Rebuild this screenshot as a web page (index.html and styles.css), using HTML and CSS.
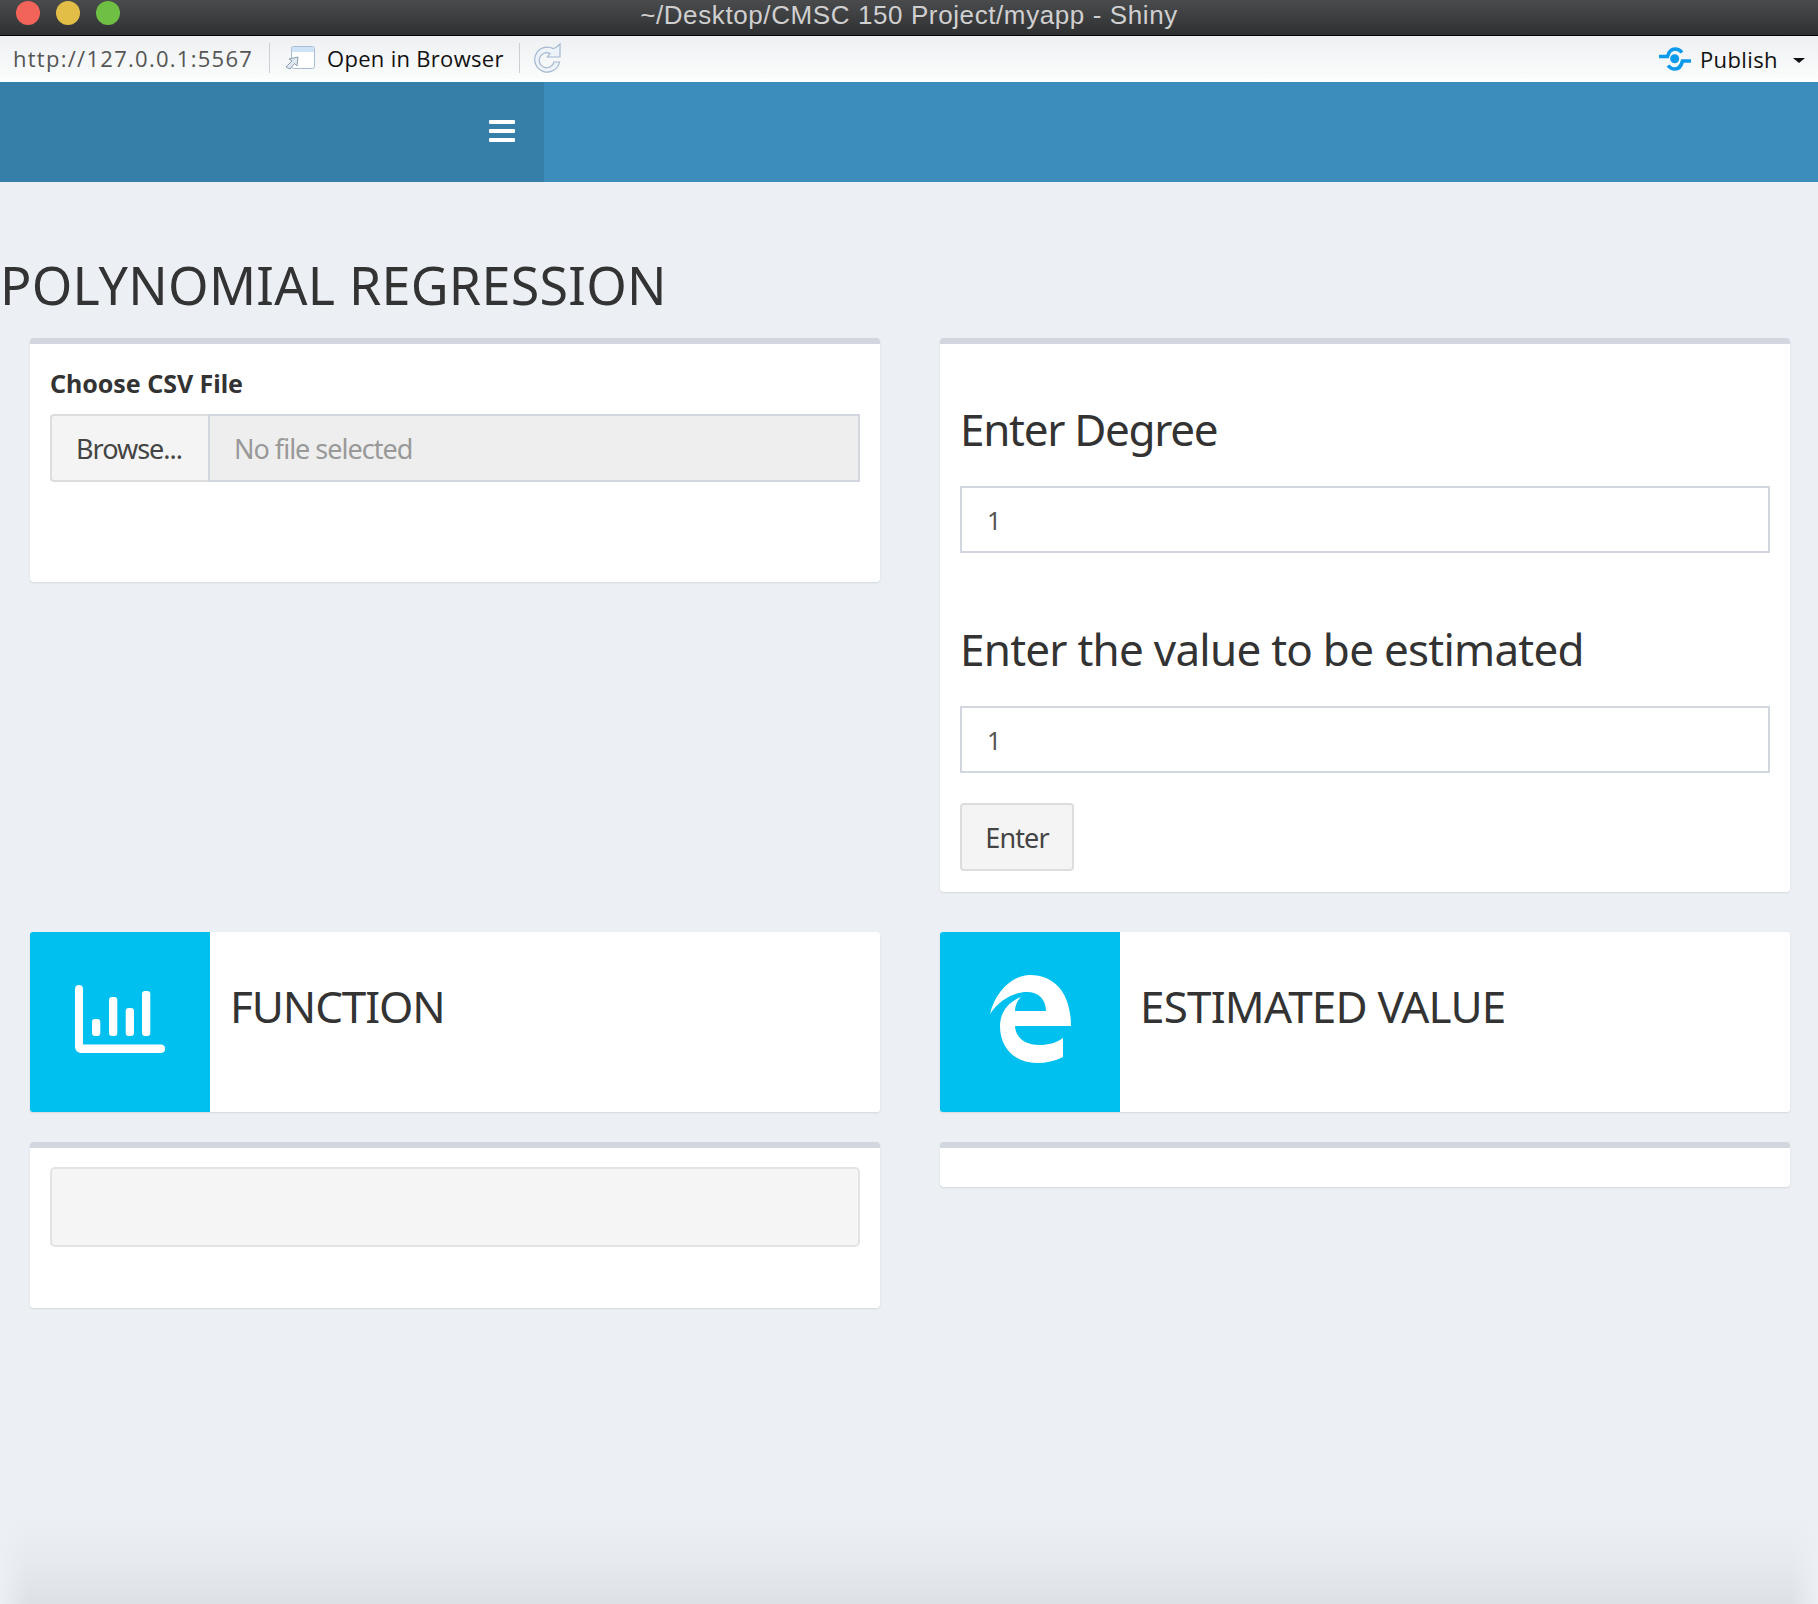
FILE: index.html
```html
<!DOCTYPE html>
<html lang="en">
<head>
<meta charset="utf-8">
<title>Shiny</title>
<link rel="stylesheet" href="styles.css">
</head>
<body>
<div class="app">
  <div class="titlebar">
    <div class="lights"><span class="light red"></span><span class="light yellow"></span><span class="light green"></span></div>
    <div class="window-title">~/Desktop/CMSC 150 Project/myapp - Shiny</div>
  </div>
  <div class="toolbar">
    <span class="url">http://127.0.0.1:5567</span>
    <span class="sep"></span>
    <svg class="open-icon" viewBox="0 0 30 23" aria-hidden="true">
      <rect x="6.5" y="0.5" width="23" height="22" rx="2" fill="#fff" stroke="#a9bdd2"/>
      <path d="M7 5V2.500A2 2 0 0 1 9 1h18a2 2 0 0 1 2 1.500V6H7z" fill="#cfe3f7"/>
      <path d="M1 21l6-6-3-2 9-2-1 9-2.500-2.500L5 23z" fill="#dfe7ef" stroke="#8b9fb3"/>
    </svg>
    <span class="open-label">Open in Browser</span>
    <span class="sep sep-two"></span>
    <svg class="refresh-icon" viewBox="0 0 30 31" aria-hidden="true">
      <path d="M21 6.500A12.500 12.500 0 1 0 27.500 20h-5.500a7.500 7.500 0 1 1-4-8.500l-2.500 3.500h12.500V2l-4 3.500z" fill="#eef3f9" stroke="#a3b8d0" stroke-width="1.200"/>
    </svg>
    <div class="publish">
      <svg class="publish-icon" viewBox="0 0 32 24" aria-hidden="true">
        <circle cx="15.700" cy="11.700" r="4.500" fill="#0d9aeb"/>
        <path d="M0 9.500h8.500C10 4 13 2 16 2c3 0 5 1 7 3.500M32 14h-8.500C22 20 19 22 16 22c-3 0-5-1-7-3.500" fill="none" stroke="#0d9aeb" stroke-width="3.600"/>
      </svg>
      <span class="publish-label">Publish</span>
      <span class="caret"></span>
    </div>
  </div>
  <div class="white-band"></div>
  <header class="header">
    <div class="brand">
      <div class="burger"><span></span><span></span><span></span></div>
    </div>
    <div class="nav"></div>
  </header>
  <main class="content">
    <h1 class="page-title">POLYNOMIAL REGRESSION</h1>
    <div class="row">
      <section class="box box-file">
        <div class="file-label">Choose CSV File</div>
        <div class="file-input">
          <span class="browse">Browse...</span>
          <span class="file-name">No file selected</span>
        </div>
      </section>
      <section class="box box-form">
        <h2 class="field-title first">Enter Degree</h2>
        <div class="text-input">1</div>
        <h2 class="field-title second">Enter the value to be estimated</h2>
        <div class="text-input">1</div>
        <div class="button">Enter</div>
      </section>
    </div>
    <div class="row row-info">
      <section class="info-box">
        <div class="info-icon">
          <svg class="chart-icon" viewBox="0 0 90 68" aria-hidden="true">
            <path d="M4 0a4 4 0 0 1 4 4v55.500h78a4 4 0 0 1 0 8.500H6a6 6 0 0 1-6-6V4a4 4 0 0 1 4-4z" fill="#fff"/>
            <rect x="17" y="34" width="8.300" height="17" rx="3" fill="#fff"/>
            <rect x="34" y="12" width="8.300" height="39" rx="3" fill="#fff"/>
            <rect x="50.700" y="23" width="8.300" height="28" rx="3" fill="#fff"/>
            <rect x="67" y="6" width="8.300" height="45" rx="3" fill="#fff"/>
          </svg>
        </div>
        <div class="info-text">FUNCTION</div>
      </section>
      <section class="info-box">
        <div class="info-icon">
          <svg class="edge-icon" viewBox="0 0 81 88" aria-hidden="true">
            <path d="M0 39C5 17 22 0 40 0c26 0 41 20 41 51H25c1 13 11 19 25 19 8 0 16-2 23-7v19c-8 4-17 6-26 6-22 0-37-15-37-37 0-13 8-24 21-29-4 4-6 9-6 14h31c0-12-8-19-19-19C24 17 9 25 0 39z" fill="#fff"/>
          </svg>
        </div>
        <div class="info-text info-text-long">ESTIMATED VALUE</div>
      </section>
    </div>
    <div class="row row-output">
      <section class="box box-output"><div class="well"></div></section>
      <section class="box box-empty"></section>
    </div>
  </main>
</div>
</body>
</html>
```
FILE: styles.css
```css
* { box-sizing: border-box; }
html, body { margin: 0; padding: 0; height: 100%; }
body { font-family: "Noto Sans", "Open Sans", sans-serif; color: #333; background: #ecf0f5; overflow: hidden; }
.app { display: flex; flex-direction: column; width: 1818px; height: 1604px; }

.titlebar { position: relative; display: flex; align-items: center; justify-content: center; height: 36px; flex: none; background: linear-gradient(#4a4b4d, #2f3031); border-bottom: 1px solid #000; }
.lights { position: absolute; left: 16px; top: 1px; display: flex; gap: 16px; }
.light { width: 24px; height: 24px; border-radius: 50%; }
.red { background: #f2645a; }
.yellow { background: #e2be47; }
.green { background: #6fbf45; }
.window-title { font-family: "Liberation Sans", Arial, sans-serif; font-size: 26px; letter-spacing: 0.600px; color: #cfcfd0; margin-top: -5px; }

.toolbar { display: flex; align-items: center; height: 43px; flex: none; padding-left: 13px; background: linear-gradient(#eef0f2, #fbfcfc); font-family: "Open Sans", "Noto Sans", sans-serif; font-size: 22px; }
.url { color: #555; width: 256px; letter-spacing: 1.270px; white-space: nowrap; }
.sep { width: 1px; height: 30px; background: #ccd0d4; }
.open-icon { width: 30px; height: 23px; margin-left: 15px; }
.open-label { color: #111; margin-left: 12px; width: 192px; white-space: nowrap; letter-spacing: 0.300px; }
.refresh-icon { width: 30px; height: 31px; margin-left: 12px; }
.publish { display: flex; align-items: center; margin-left: auto; padding: 2px 13px 0 0; }
.publish-icon { width: 32px; height: 24px; }
.publish-label { color: #111; margin-left: 9px; letter-spacing: 0.400px; }
.caret { width: 0; height: 0; margin: 3px 0 0 15px; border-left: 6px solid transparent; border-right: 6px solid transparent; border-top: 5px solid #111; }
.white-band { height: 3px; flex: none; background: #fff; }

.header { display: flex; height: 100px; flex: none; }
.brand { display: flex; align-items: center; justify-content: flex-end; width: 544px; padding: 0 29px 2px 0; background: #367fa9; }
.burger { display: flex; flex-direction: column; gap: 5px; width: 26px; margin-top: -1px; }
.burger span { height: 4px; background: #fff; border-radius: 1px; }
.nav { flex: 1; background: #3c8dbc; }

.content { flex: 1; display: flex; flex-direction: column; padding: 0 28px 0 30px; background: linear-gradient(to right, #ecf0f5, rgba(236,240,245,0) 28px, rgba(236,240,245,0) calc(100% - 28px), #ecf0f5), linear-gradient(to top, #dde0e5 0, #e6e9ee 40px, #ecf0f5 90px); }
.page-title { margin: 0 0 0 -30px; padding-top: 71px; height: 156px; font-size: 52px; line-height: 64px; font-weight: 400; letter-spacing: 0.260px; color: #333; white-space: nowrap; }

.row { display: grid; grid-template-columns: 850px 850px; column-gap: 60px; align-items: start; }
.row-info { margin-top: 40px; }
.row-output { margin-top: 30px; }

.box { background: #fff; border-top: 6px solid #d2d6de; border-radius: 4px; box-shadow: 0 1px 2px rgba(0,0,0,.1); padding: 0 20px; }
.box-file { height: 244px; }
.file-label { margin-top: 21px; font-size: 25px; line-height: 36px; font-weight: 700; letter-spacing: -0.050px; }
.file-input { display: flex; height: 68px; margin-top: 13px; font-size: 27px; letter-spacing: -1px; }
.browse { display: flex; align-items: center; width: 158px; padding-left: 24px; background: #f4f4f4; border: 2px solid #ddd; border-right: 0; border-radius: 4px 0 0 4px; color: #444; }
.file-name { display: flex; align-items: center; flex: 1; padding-left: 24px; background: #eee; border: 2px solid #d2d6de; color: #999; }

.box-form { height: 554px; }
.field-title { margin: 0; font-size: 44px; line-height: 56px; font-weight: 400; letter-spacing: -1.300px; white-space: nowrap; }
.first { margin-top: 57px; margin-bottom: 29px; }
.second { margin-top: 68px; margin-bottom: 29px; letter-spacing: -0.750px; }
.text-input { display: flex; align-items: center; height: 67px; padding-left: 25px; border: 2px solid #d2d6de; font-size: 25px; color: #555; }
.button { display: inline-flex; align-items: center; justify-content: center; width: 114px; height: 68px; margin-top: 30px; background: #f4f4f4; border: 2px solid #ddd; border-radius: 4px; font-size: 27px; letter-spacing: -0.900px; color: #444; }

.info-box { display: flex; height: 180px; background: #fff; border-radius: 3px; box-shadow: 0 1px 2px rgba(0,0,0,.1); }
.info-icon { display: flex; align-items: center; justify-content: center; width: 180px; padding-bottom: 6px; background: #00c0ef; border-radius: 3px 0 0 3px; }
.chart-icon { width: 90px; height: 68px; }
.edge-icon { width: 81px; height: 88px; }
.info-text { margin: 46px 0 0 20px; font-size: 44px; line-height: 56px; letter-spacing: -1.100px; white-space: nowrap; }
.info-text-long { letter-spacing: -0.800px; }

.box-output { height: 166px; padding-top: 19px; }
.well { height: 80px; background: #f5f5f5; border: 2px solid #e3e3e3; border-radius: 5px; }
.box-empty { height: 45px; }
```
